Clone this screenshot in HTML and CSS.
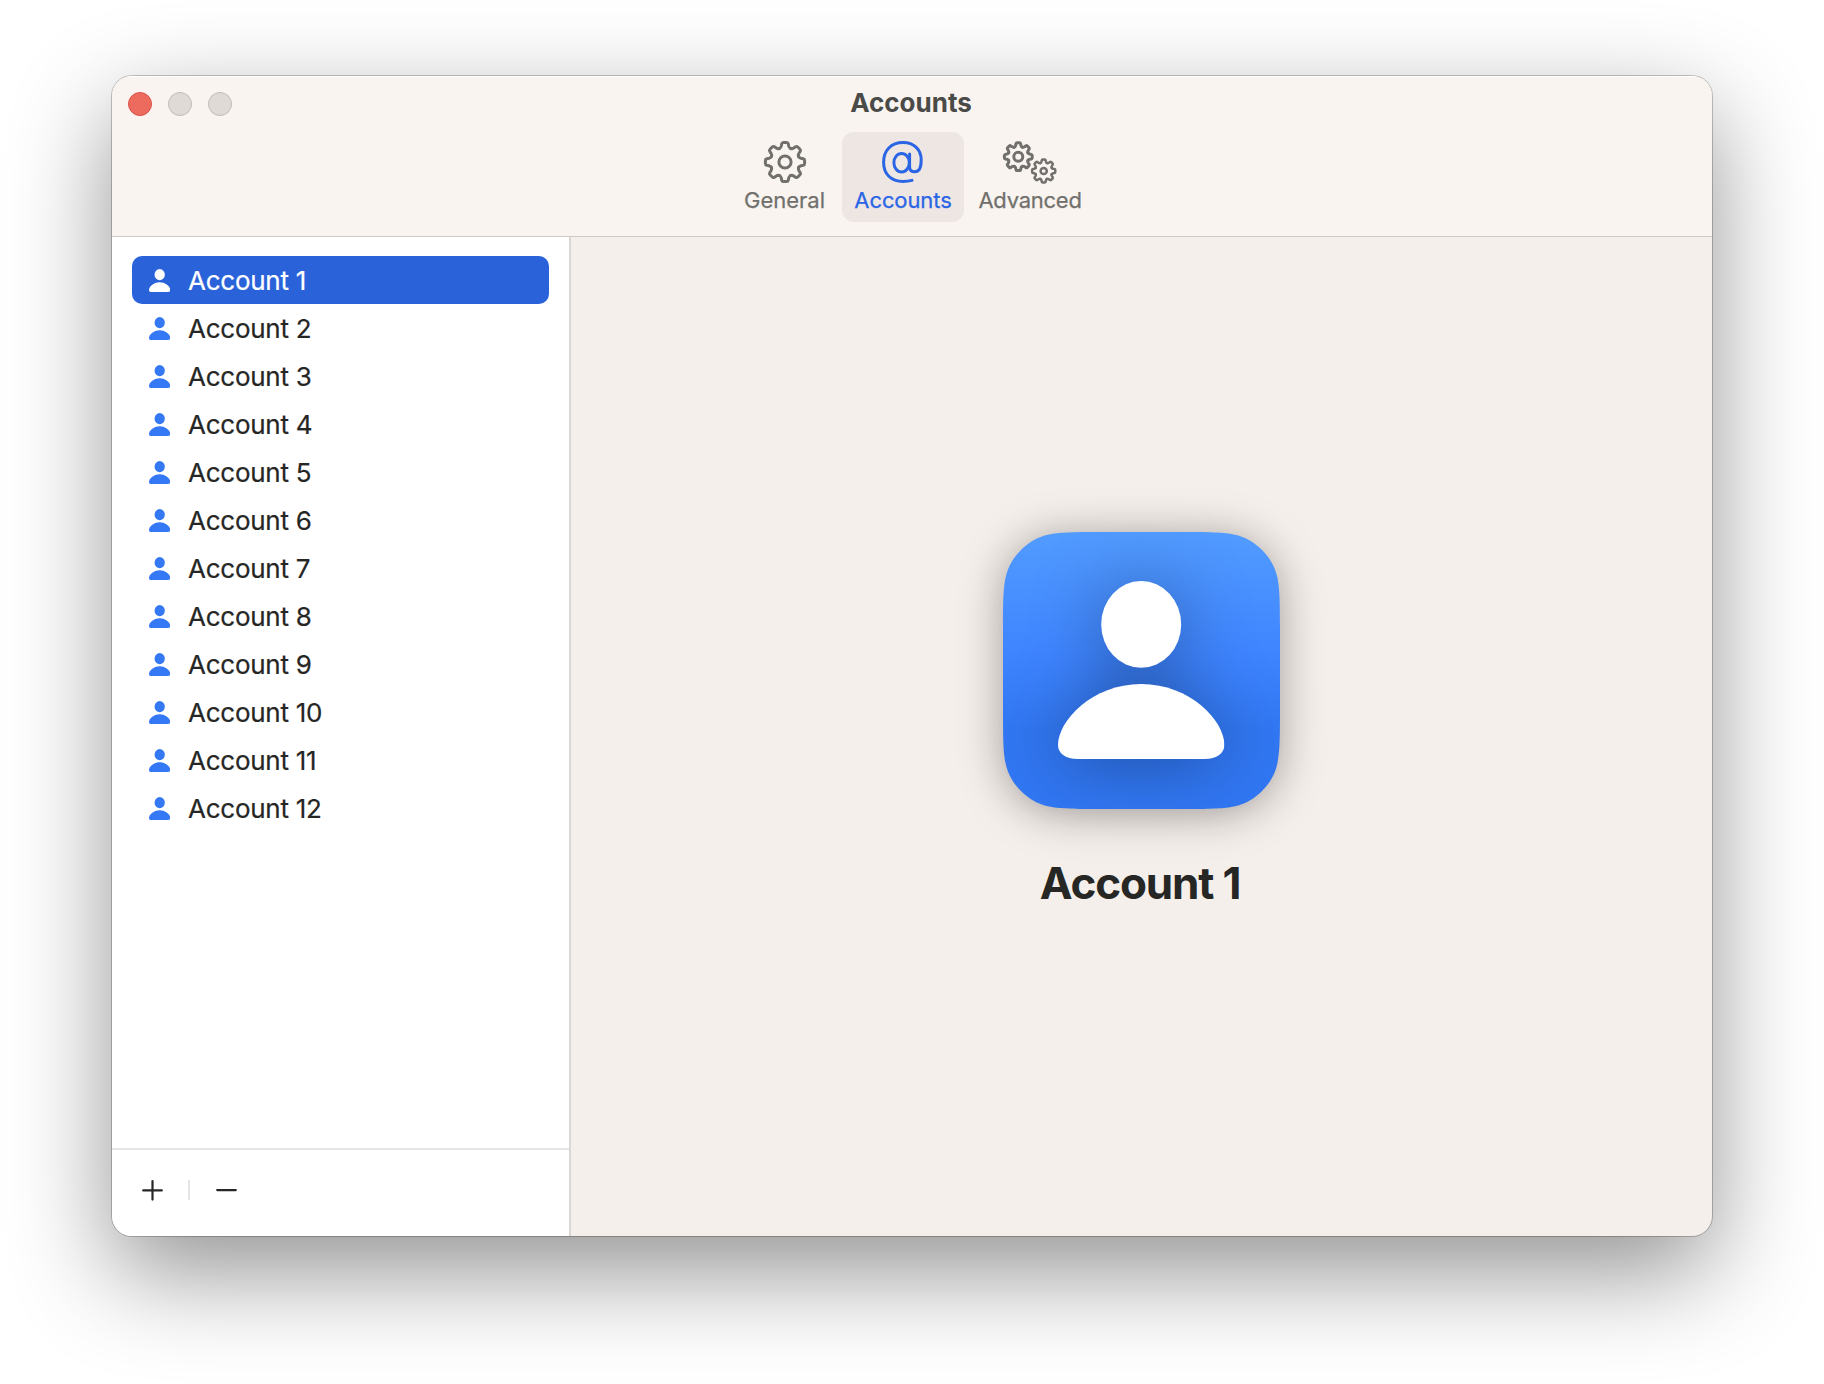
FILE: index.html
```html
<!DOCTYPE html>
<html lang="en">
<head>
<meta charset="utf-8">
<title>Accounts</title>
<link rel="stylesheet" href="styles.css">
</head>
<body>
<svg class="defs" aria-hidden="true">
  <defs>
    <path id="tooth" vector-effect="non-scaling-stroke" d="M-5.6 -13.5Q-4.1 -14.2 -3.7 -16L-3.3 -18.2Q-3 -19.6 -1.6 -19.6H1.6Q3 -19.6 3.3 -18.2L3.7 -16Q4.1 -14.2 5.6 -13.5"/>
    <g id="cog">
      <use href="#tooth"/>
      <use href="#tooth" transform="rotate(45)"/>
      <use href="#tooth" transform="rotate(90)"/>
      <use href="#tooth" transform="rotate(135)"/>
      <use href="#tooth" transform="rotate(180)"/>
      <use href="#tooth" transform="rotate(225)"/>
      <use href="#tooth" transform="rotate(270)"/>
      <use href="#tooth" transform="rotate(315)"/>
    </g>
    <symbol id="person" viewBox="55 49 166.5 178">
      <ellipse cx="138.2" cy="92.4" rx="40" ry="43.4"/>
      <path d="M75 227C62 227 55 221 55 213C55 189 89 152 138.2 152C187.4 152 221.4 189 221.4 213C221.4 221 214 227 201.4 227Z"/>
    </symbol>
  </defs>
</svg>
<main class="window">
  <header class="toolbar">
    <div class="titlebar">
      <div class="lights"><span class="light close"></span><span class="light"></span><span class="light"></span></div>
      <h1 class="title">Accounts</h1>
    </div>
    <nav class="tabs">
      <a class="tab general">
        <svg class="tab-icon" width="44" height="44" viewBox="-22 -22 44 44"><use href="#cog"/><circle r="6.1"/></svg>
        <span class="label label-general">General</span>
      </a>
      <a class="tab accounts active">
        <svg class="tab-icon" width="42" height="44" viewBox="0 -1 42 44"><path d="M30 39.4C27.5 40.1 24.5 40.5 21 40.5C9 40.5 1.6 33 1.6 21.3C1.6 9.6 9 1.6 21 1.6C32 1.6 39.2 8.5 39.2 18.8C39.2 26.5 37.5 30.8 33 30.8C30 30.8 27.6 29.3 27.6 26V13"/><ellipse cx="19.6" cy="21.7" rx="7.7" ry="9.3"/></svg>
        <span class="label label-accounts">Accounts</span>
      </a>
      <a class="tab advanced">
        <svg class="tab-icon" width="56" height="44" viewBox="0 0 56 44"><g transform="translate(16.3 16.7) scale(.71)"><use href="#cog"/></g><circle cx="16.3" cy="16.7" r="4.5"/><g class="small" transform="translate(41.7 31) scale(.59)"><use href="#cog"/></g><circle class="small" cx="41.7" cy="31" r="3.1"/></svg>
        <span class="label label-advanced">Advanced</span>
      </a>
    </nav>
  </header>
  <div class="content">
    <aside class="sidebar">
      <ul class="list">
        <li class="row selected"><svg class="avatar"><use href="#person"/></svg><span>Account 1</span></li>
        <li class="row"><svg class="avatar"><use href="#person"/></svg><span>Account 2</span></li>
        <li class="row"><svg class="avatar"><use href="#person"/></svg><span>Account 3</span></li>
        <li class="row"><svg class="avatar"><use href="#person"/></svg><span>Account 4</span></li>
        <li class="row"><svg class="avatar"><use href="#person"/></svg><span>Account 5</span></li>
        <li class="row"><svg class="avatar"><use href="#person"/></svg><span>Account 6</span></li>
        <li class="row"><svg class="avatar"><use href="#person"/></svg><span>Account 7</span></li>
        <li class="row"><svg class="avatar"><use href="#person"/></svg><span>Account 8</span></li>
        <li class="row"><svg class="avatar"><use href="#person"/></svg><span>Account 9</span></li>
        <li class="row"><svg class="avatar"><use href="#person"/></svg><span>Account 10</span></li>
        <li class="row"><svg class="avatar"><use href="#person"/></svg><span>Account 11</span></li>
        <li class="row"><svg class="avatar"><use href="#person"/></svg><span>Account 12</span></li>
      </ul>
      <footer class="actions">
        <svg class="action" width="22" height="22" viewBox="0 0 22 22"><path d="M1.2 11.4H19.8M10.5 2V20.6"/></svg>
        <span class="separator"></span>
        <svg class="action" width="22" height="22" viewBox="0 0 22 22"><path d="M1.2 11.1H19.8"/></svg>
      </footer>
    </aside>
    <section class="detail">
      <svg class="app-icon" width="277" height="277" viewBox="0 0 277 277">
        <defs><linearGradient id="tile" x1="0" y1="0" x2="0" y2="1"><stop offset="0" stop-color="#529bff"/><stop offset=".45" stop-color="#3e84ff"/><stop offset=".72" stop-color="#3177f3"/><stop offset="1" stop-color="#3177f4"/></linearGradient></defs>
        <path fill="url(#tile)" d="M0 95C0 66 .6 56 2.5 46C5 34 10.8 25.2 18 18C25.2 10.8 34 5 46 2.5C56 .6 66 0 95 0H182C211 0 221 .6 231 2.5C243 5 251.8 10.8 259 18C266.2 25.2 272 34 274.5 46C276.4 56 277 66 277 95V182C277 211 276.4 221 274.5 231C272 243 266.2 251.8 259 259C251.8 266.2 243 272 231 274.5C221 276.4 211 277 182 277H95C66 277 56 276.4 46 274.5C34 272 25.2 266.2 18 259C10.8 251.8 5 243 2.5 231C.6 221 0 211 0 182Z"/>
        <use class="figure" href="#person" x="55" y="49" width="166.5" height="178"/>
      </svg>
      <h2 class="name">Account 1</h2>
    </section>
  </div>
</main>
</body>
</html>
```

FILE: styles.css
```css
* { box-sizing: border-box; }
body {
  margin: 0;
  padding: 76px 112px 148px;
  background: #fff;
  font-family: Inter, "Liberation Sans", sans-serif;
  color: #262625;
}
.defs { display: block; width: 0; height: 0; }
.window {
  display: flex;
  flex-direction: column;
  height: 1160px;
  border-radius: 20px;
  overflow: hidden;
  background: #f5efeb;
  box-shadow: 0 0 0 1px rgba(0, 0, 0, .22), 0 36px 100px rgba(0, 0, 0, .43);
}
.toolbar {
  height: 161px;
  background: #f9f4f0;
  border-bottom: 1px solid #d0cbc8;
  box-shadow: inset 0 1px #fff;
}
.titlebar {
  display: grid;
  grid-template-columns: 1fr auto 1fr;
  align-items: center;
  height: 56px;
  padding-left: 16px;
  padding-right: 18px;
}
.lights { display: flex; gap: 16px; }
.light {
  width: 24px;
  height: 24px;
  border-radius: 50%;
  background: #dfdad6;
  border: 1px solid #bfbab7;
}
.close { background: #ec6a5e; border-color: #dc5048; }
.title {
  margin: -2px 0 0;
  font-size: 26px;
  line-height: 32px;
  font-weight: 700;
  color: #4a4a48;
}
.tabs { display: flex; gap: 4px; padding-left: 619px; }
.tab {
  display: flex;
  flex-direction: column;
  align-items: center;
  height: 90px;
  padding-top: 8px;
  border-radius: 12px;
  color: #71706d;
}
.general { width: 107px; }
.accounts { width: 122px; }
.advanced { width: 124px; }
.active { background: #eee6e2; color: #2965e5; }
.tab-icon {
  fill: none;
  stroke: currentColor;
  stroke-width: 3;
  stroke-linecap: round;
  stroke-linejoin: round;
}
.small { stroke-width: 2.5; }
.label { margin-top: 3px; font-size: 22px; line-height: 26px; -webkit-text-stroke: .25px currentColor; }
.label-accounts { letter-spacing: -.1px; }
.label-advanced { letter-spacing: -.25px; }
.content { display: flex; flex: 1; min-height: 0; }
.sidebar {
  display: flex;
  flex-direction: column;
  width: 459px;
  background: #fff;
  border-right: 2px solid #dad6d3;
}
.list { flex: 1; margin: 0; padding: 19px 20px 0; list-style: none; }
.row {
  display: flex;
  align-items: center;
  gap: 17px;
  height: 48px;
  padding-left: 17px;
  font-size: 26px;
  letter-spacing: -.25px;
  -webkit-text-stroke: .2px currentColor;
}
.avatar { width: 21.4px; height: 23px; margin-right: .6px; fill: #3478f6; }
.selected { background: #2962d9; border-radius: 10px; color: #fff; }
.selected .avatar { fill: #fff; }
.actions {
  display: flex;
  align-items: center;
  height: 88px;
  padding: 0 0 6px 30px;
  border-top: 2px solid #e5e5e5;
}
.action { stroke: #262625; stroke-width: 2.2; stroke-linecap: round; }
.separator { width: 2px; height: 20px; margin: 0 26px 0 24px; background: #e5e5e5; }
.detail {
  display: flex;
  flex: 1;
  flex-direction: column;
  align-items: center;
  padding-top: 295px;
}
.app-icon { overflow: visible; filter: drop-shadow(0 4px 22px rgba(0, 0, 0, .34)); }
.figure { fill: #fff; filter: drop-shadow(0 4px 36px rgba(0, 0, 0, .34)); }
.name {
  margin: 46px 3px 0 0;
  font-size: 44px;
  line-height: 56px;
  font-weight: 700;
  letter-spacing: -1.15px;
}
```
